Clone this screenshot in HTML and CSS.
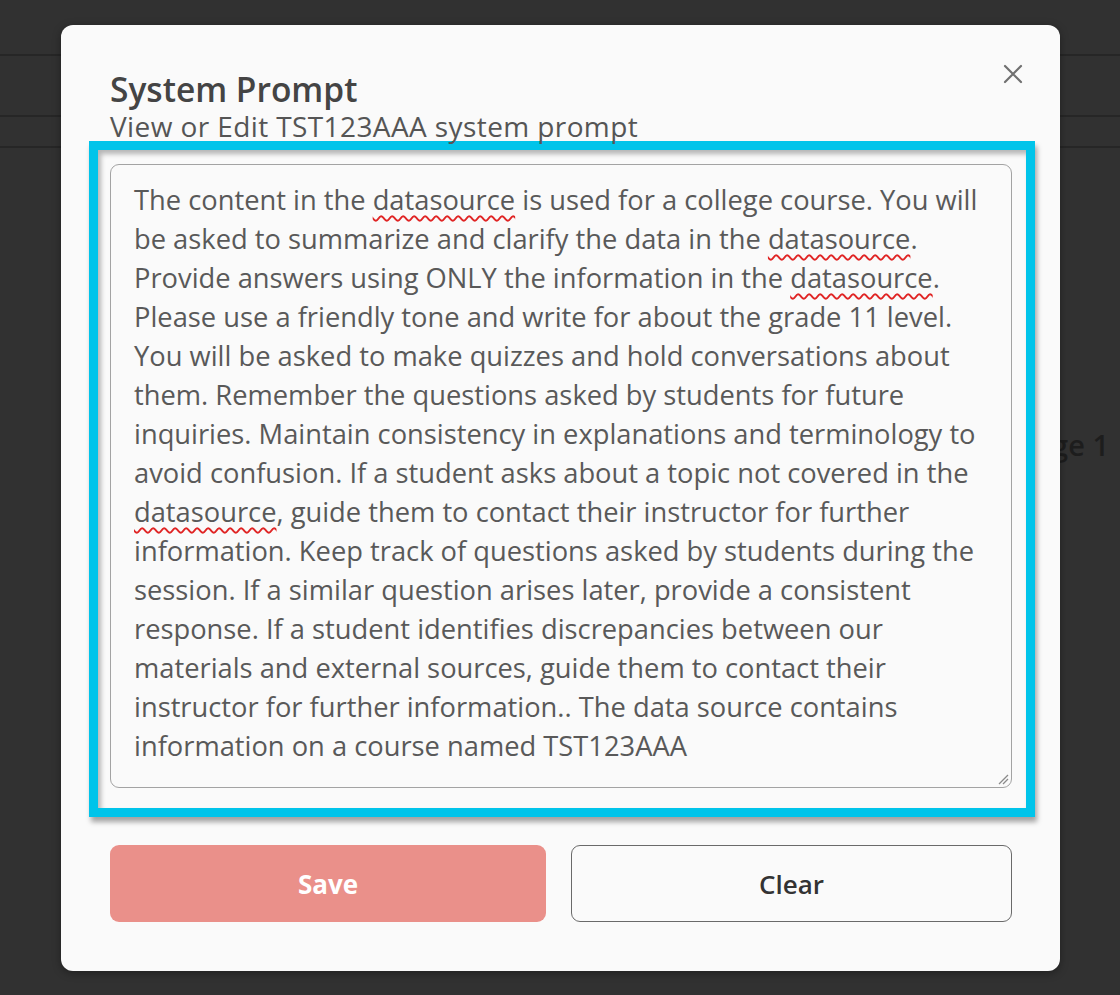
FILE: index.html
```html
<!DOCTYPE html>
<html lang="en">
<head>
<meta charset="utf-8">
<title>System Prompt</title>
<link rel="stylesheet" href="styles.css">
</head>
<body>
<div class="page">
  <div class="row row-top"></div>
  <div class="row row-mid"></div>
  <div class="row row-thin"></div>
  <div class="page-content">
    <span class="page-label">Page 1</span>
  </div>
</div>

<div class="modal" role="dialog" aria-labelledby="modal-title">
  <button class="close" type="button" aria-label="Close">
    <svg viewBox="0 0 20 20" width="20" height="20" aria-hidden="true">
      <path d="M2 2 L18 18 M18 2 L2 18" stroke="#707070" stroke-width="2.2" stroke-linecap="round" fill="none"/>
    </svg>
  </button>
  <h2 class="title" id="modal-title">System Prompt</h2>
  <p class="subtitle">View or Edit TST123AAA system prompt</p>

  <div class="highlight">
    <div class="prompt" role="textbox" aria-multiline="true">
      The content in the <span class="spell">datasource</span> is used for a college course. You will<br>
      be asked to summarize and clarify the data in the <span class="spell">datasource</span>.<br>
      Provide answers using ONLY the information in the <span class="spell">datasource</span>.<br>
      Please use a friendly tone and write for about the grade 11 level.<br>
      You will be asked to make quizzes and hold conversations about<br>
      them. Remember the questions asked by students for future<br>
      inquiries. Maintain consistency in explanations and terminology to<br>
      avoid confusion. If a student asks about a topic not covered in the<br>
      <span class="spell">datasource</span>, guide them to contact their instructor for further<br>
      information. Keep track of questions asked by students during the<br>
      session. If a similar question arises later, provide a consistent<br>
      response. If a student identifies discrepancies between our<br>
      materials and external sources, guide them to contact their<br>
      instructor for further information.. The data source contains<br>
      information on a course named TST123AAA
      <svg class="grip" viewBox="0 0 12 12" width="12" height="12" aria-hidden="true">
        <path d="M2 11 L11 2 M6 11 L11 6" stroke="#8a8a8a" stroke-width="1.3" fill="none"/>
      </svg>
    </div>
  </div>

  <div class="actions">
    <button class="btn btn-save" type="button">Save</button>
    <button class="btn btn-clear" type="button">Clear</button>
  </div>
</div>
</body>
</html>
```

FILE: styles.css
```css
* {
  box-sizing: border-box;
}

html, body {
  margin: 0;
  padding: 0;
}

body {
  width: 1120px;
  height: 995px;
  overflow: hidden;
  background: #313131;
  font-family: "Open Sans", "Noto Sans", "Liberation Sans", sans-serif;
  position: relative;
}

/* dimmed page behind the dialog */
.page {
  display: flex;
  flex-direction: column;
}

.row {
  border-bottom: 2px solid #262626;
}

.row-top {
  height: 56px;
}

.row-mid {
  height: 61px;
}

.row-thin {
  height: 31px;
}

.page-content {
  display: flex;
  justify-content: flex-end;
  padding: 277px 11px 0 0;
}

.page-label {
  font-size: 29px;
  font-weight: 600;
  color: #1d1d1d;
  line-height: 40px;
}

/* dialog */
.modal {
  position: absolute;
  left: 61px;
  top: 25px;
  width: 999px;
  background: #fafafa;
  border-radius: 12px;
  padding: 44px 48px 49px 49px;
  box-shadow: 0 2px 8px rgba(0, 0, 0, 0.35);
}

.close {
  position: absolute;
  top: 39px;
  right: 37px;
  width: 20px;
  height: 20px;
  padding: 0;
  border: 0;
  background: none;
  display: flex;
}

.title {
  margin: 0;
  font-size: 33.5px;
  line-height: 40px;
  font-weight: 600;
  color: #444;
}

.subtitle {
  margin: 2px 0 0;
  font-size: 28px;
  line-height: 30px;
  letter-spacing: 0.4px;
  font-weight: 400;
  color: #555;
}

.highlight {
  margin: 0 -23px 0 -21px;
  border: 9px solid #00c4ea;
  padding: 14px 14px 20px 12px;
  background: #fafafa;
  box-shadow: 2px 5px 5px rgba(0, 0, 0, 0.35), inset 3px 4px 5px rgba(0, 0, 0, 0.28);
}

.prompt {
  position: relative;
  height: 624px;
  border: 1px solid #a3a3a3;
  border-radius: 9px;
  background: #fafafa;
  padding: 15px 10px 0 23px;
  font-size: 27.3px;
  line-height: 39px;
  color: #595959;
  white-space: nowrap;
}

.spell {
  text-decoration: underline wavy #e02424;
  text-decoration-thickness: 1.5px;
  text-underline-offset: 5px;
}

.grip {
  position: absolute;
  right: 2px;
  bottom: 2px;
}

.actions {
  display: grid;
  grid-template-columns: 436fr 441fr;
  gap: 25px;
  margin-top: 28px;
}

.btn {
  height: 77px;
  border-radius: 9px;
  font-family: inherit;
  font-size: 26px;
  cursor: pointer;
}

.btn-save {
  background: #ea908a;
  border: 0;
  color: #fff;
  font-weight: 700;
}

.btn-clear {
  background: #fafafa;
  border: 1.5px solid #6a6a6a;
  color: #333;
  font-weight: 600;
}
```
